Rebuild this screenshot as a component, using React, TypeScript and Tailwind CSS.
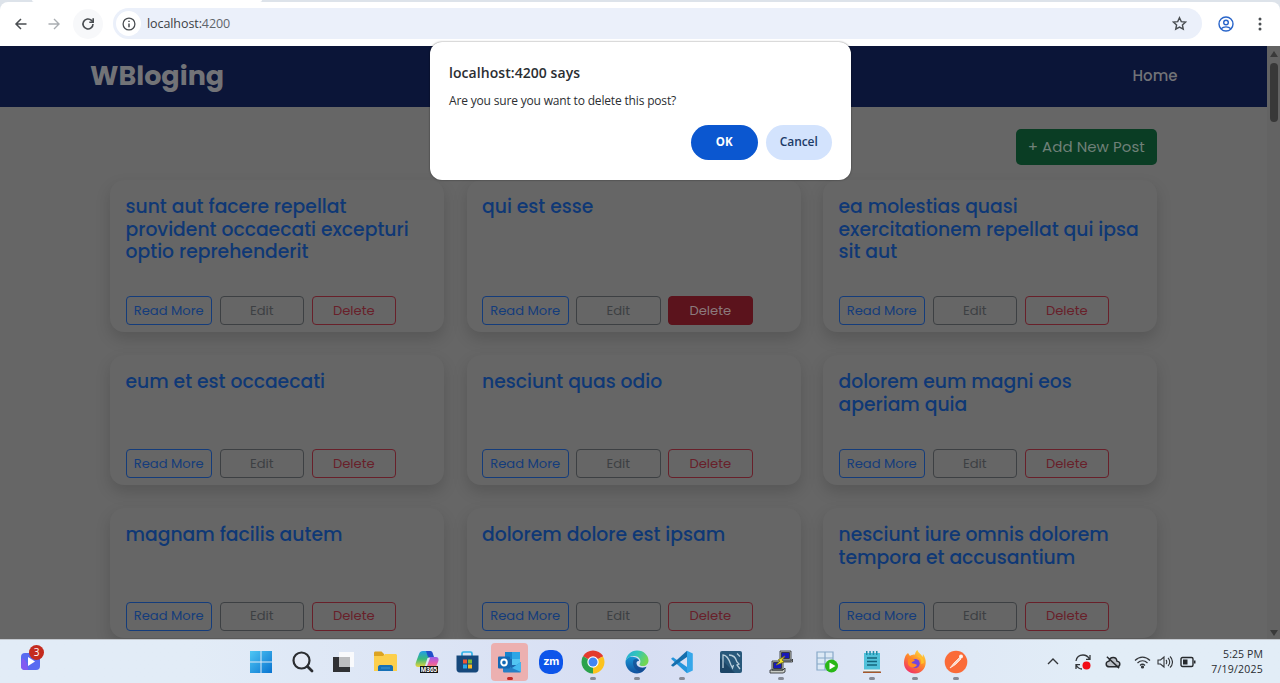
import React from "react";

const poppins = "font-['Poppins','Inter',sans-serif]";
const segoe = "font-['Segoe_UI','Open_Sans',sans-serif]";

type Post = { title: string; active?: boolean };

const rows: { height: string; posts: Post[] }[] = [
  {
    height: "h-[152px]",
    posts: [
      { title: "sunt aut facere repellat provident occaecati excepturi optio reprehenderit" },
      { title: "qui est esse", active: true },
      { title: "ea molestias quasi exercitationem repellat qui ipsa sit aut" },
    ],
  },
  {
    height: "h-[130px]",
    posts: [
      { title: "eum et est occaecati" },
      { title: "nesciunt quas odio" },
      { title: "dolorem eum magni eos aperiam quia" },
    ],
  },
  {
    height: "h-[129.5px]",
    posts: [
      { title: "magnam facilis autem" },
      { title: "dolorem dolore est ipsam" },
      { title: "nesciunt iure omnis dolorem tempora et accusantium" },
    ],
  },
];

function Card({ post, height }: { post: Post; height: string }) {
  const btn = "flex h-[29px] items-center justify-center rounded-[4px] border text-[13.125px] whitespace-nowrap";
  return (
    <article className={`flex w-[334px] flex-col justify-between rounded-[14px] bg-[#666666] px-[15.5px] pt-[16px] pb-[7px] shadow-[0_7px_15px_rgba(0,0,0,0.15)] ${height}`}>
      <h2 className="text-[18.75px] leading-[22.5px] font-medium text-[#0f3875]">{post.title}</h2>
      <div className="flex gap-[7.5px]">
        <button className={`${btn} w-[86.5px] border-[#143c7b] text-[#143c7b]`}>Read More</button>
        <button className={`${btn} w-[84.5px] border-[#3d4043] text-[#3d4043]`}>Edit</button>
        <button className={`${btn} w-[84.5px] ${post.active ? "border-[#5b131c] bg-[#5b131c] text-[#8b7a7d]" : "border-[#68202a] text-[#68202a]"}`}>Delete</button>
      </div>
    </article>
  );
}

function Toolbar() {
  return (
    <header className="flex h-[46px] flex-col bg-[#dde3ea]">
      <div className="flex h-[2px] shrink-0">
        <div className="ml-8 w-[230px] rounded-b-sm bg-white" />
      </div>
      <div className="flex h-11 items-center rounded-t-lg bg-white pb-px">
        <svg className="ml-[13px] h-4 w-4" viewBox="0 0 16 16" fill="none" stroke="#4a4e52" strokeWidth="1.5"><path d="M13.5 8H3M8 3 3 8l5 5" /></svg>
        <svg className="ml-[17px] h-4 w-4" viewBox="0 0 16 16" fill="none" stroke="#aaaeb2" strokeWidth="1.4"><path d="M2.5 8H13M8 3l5 5-5 5" /></svg>
        <div className="ml-[11px] flex h-[30px] w-[30px] items-center justify-center rounded-full bg-[#f7f8fa]">
          <svg className="h-4 w-4" viewBox="0 0 16 16" fill="none" stroke="#4a4e52" strokeWidth="1.6"><path d="M13 8a5 5 0 1 1-1.5-3.600L13 6" /><path d="M13.200 2.200v4H9.300" /></svg>
        </div>
        <div className="ml-[10px] flex h-[31px] w-[1089px] items-center rounded-full bg-[#ebf0fa] pl-[3px]">
          <div className="flex h-[25px] w-[25px] items-center justify-center rounded-full bg-white">
            <svg className="h-[14px] w-[14px]" viewBox="0 0 14 14" fill="none" stroke="#4a4e52" strokeWidth="1.3"><circle cx="7" cy="7" r="5.900" /><path d="M7 6.400v3.800M7 3.700v1.400" strokeWidth="1.500" /></svg>
          </div>
          <span className={`ml-[6px] pt-[2px] text-[12.5px] tracking-[-0.08px] text-[#60656b] ${segoe}`}><span className="text-[#3d4145]">localhost:</span>4200</span>
          <svg className="mr-[15px] ml-auto h-[15px] w-[15px]" viewBox="0 0 16 16" fill="none" stroke="#4a4e52" strokeWidth="1.5"><path d="m8 1.800 1.900 4.200 4.600.5-3.400 3.100.9 4.500L8 11.800l-4 2.300.9-4.500L1.500 6.500 6.100 6z" /></svg>
        </div>
        <svg className="ml-4 h-4 w-4" viewBox="0 0 16 16" fill="none" stroke="#2864c9" strokeWidth="1.4"><circle cx="8" cy="8" r="7" /><circle cx="8" cy="6.500" r="2.300" /><path d="M3.200 12.800c2.300-2.600 7.300-2.600 9.600 0" /></svg>
        <svg className="ml-[18px] h-4 w-4" viewBox="0 0 16 16" fill="#4a4e52"><circle cx="8" cy="3" r="1.500" /><circle cx="8" cy="8" r="1.500" /><circle cx="8" cy="13" r="1.500" /></svg>
      </div>
    </header>
  );
}

function Dialog() {
  return (
    <div className={`absolute top-[41.5px] left-[430px] flex h-[138px] w-[421px] flex-col rounded-[12px] bg-white px-[19px] text-[#2b2e32] shadow-[0_0_2px_rgba(0,0,0,0.55)] ${segoe}`}>
      <p className="mt-[21px] text-[14px] leading-5 font-semibold tracking-[0.06px]">localhost:4200 says</p>
      <p className="mt-[9px] text-[12px] leading-[18px] tracking-[-0.17px]">Are you sure you want to delete this post?</p>
      <div className="mt-[15px] flex justify-end gap-[8px] text-[12px] font-semibold">
        <button className="h-[35px] w-[66.5px] rounded-full bg-[#0b57d0] text-[11.5px] font-bold text-white">OK</button>
        <button className="h-[35px] w-[66.5px] rounded-full bg-[#d3e3fd] tracking-[-0.1px] text-[#1c3b68]">Cancel</button>
      </div>
    </div>
  );
}

const icon = "h-6 w-6";

const WindowsIcon = () => (
  <svg className={icon} viewBox="0 0 24 24">
    <defs><linearGradient id="win" x1="0" y1="0" x2="1" y2="1"><stop stopColor="#4fc7f4" /><stop offset="1" stopColor="#0873d0" /></linearGradient></defs>
    <path fill="url(#win)" d="M1 1h10.500v10.500H1zM12.500 1H23v10.500H12.500zM1 12.500h10.500V23H1zM12.500 12.500H23V23H12.500z" />
  </svg>
);
const SearchIcon = () => (
  <svg className={icon} viewBox="0 0 24 24" fill="none" stroke="#2b2d31" strokeWidth="2.2"><circle cx="11.500" cy="10.500" r="8" fill="#e4eaf5" /><path d="m17.500 16.500 4.500 4.500" strokeWidth="2.800" strokeLinecap="round" /></svg>
);
const TaskViewIcon = () => (
  <svg className={icon} viewBox="0 0 24 24"><path fill="#303134" d="M2 7h17v15H2z" /><path fill="#f9fafc" d="M8 2h15v15H8z" /><path fill="#bcbdbf" d="M8 7h11v10H8z" /></svg>
);
const FolderIcon = () => (
  <svg className={icon} viewBox="0 0 24 24">
    <path fill="#dca321" d="M1 3c0-1 .6-1.500 1.500-1.500h6L11 4v4H1z" /><path fill="#fccf4c" d="M1 6h9l2-2h10.500c.8 0 1.500.6 1.500 1.500V21H1z" />
    <path fill="#1670b6" d="M5 21v-4c0-1 .8-2 2-2h11c1.200 0 2 1 2 2v4z" /><path fill="#3e96d3" d="M8 17.500h9v1H8z" />
  </svg>
);
const M365Icon = () => (
  <svg className={icon} viewBox="0 0 24 24">
    <defs>
      <linearGradient id="ma" x2="0" y2="1"><stop stopColor="#229de8" /><stop offset=".5" stopColor="#39b97b" /><stop offset="1" stopColor="#e9d43d" /></linearGradient>
      <linearGradient id="mb" x2="0" y2="1"><stop stopColor="#9a5eea" /><stop offset=".6" stopColor="#e45bae" /><stop offset="1" stopColor="#f5806f" /></linearGradient>
    </defs>
    <path fill="url(#ma)" d="M8 1h8l-4 12c-.8 2.500-2 4-4 4H3c-2 0-3-1.500-2.300-4L4 4c.6-2 2-3 4-3z" />
    <path fill="#214fc9" d="M11 1h4c2 0 2.500 1.300 3 3l1 3h-6z" />
    <path fill="url(#mb)" d="M15 7h6c2 0 3 1.500 2.400 4L21 17H10l3-8c.4-1.300 1-2 2-2z" />
    <path fill="#dfe6f6" d="m12.500 8-2.500 8h2l3-8z" />
    <path fill="#111" d="M5 16h18v7H5z" />
    <text x="14" y="22" fill="#fff" fontFamily="Liberation Sans" fontSize="6.5" fontWeight="bold" textAnchor="middle">M365</text>
  </svg>
);
const StoreIcon = () => (
  <svg className={icon} viewBox="0 0 24 24">
    <path d="M7 6V3.500C7 2.500 7.600 2 8.500 2h7c1 0 1.500.5 1.500 1.500V6" fill="none" stroke="#30b2e8" strokeWidth="1.700" />
    <path fill="#16487b" d="M1.500 5.500h22v13.500c0 2-1.200 3.500-3 3.500h-16c-1.800 0-3-1.500-3-3.500z" />
    <path fill="#ef5635" d="M8 9.500h4v4H8z" /><path fill="#7dbb35" d="M13 9.500h4v4h-4z" /><path fill="#29a9ea" d="M8 14.500h4v4H8z" /><path fill="#fdbb20" d="M13 14.500h4v4h-4z" />
  </svg>
);
const OutlookIcon = () => (
  <svg className={icon} viewBox="0 0 24 24">
    <path fill="#1c68ae" d="M7 2h15v19H7z" /><path fill="#2da5e5" d="M14 2h8v7h-8z" /><path fill="#1683cd" d="M7 2h7v7H7z" /><path fill="#52c5f2" d="M14 9h8v6h-8z" />
    <path fill="#267fc6" d="m5 12 9 6 9-6v9c0 1-.6 1.500-1.500 1.500h-15C5.500 22.500 5 22 5 21z" /><path fill="#43b8ef" d="m14 18 9-6v10z" />
    <rect x="0" y="6.500" width="12" height="12" rx="1" fill="#1268b5" /><ellipse cx="6" cy="12.500" rx="2.800" ry="3" fill="none" stroke="#fff" strokeWidth="1.900" />
  </svg>
);
const ZoomIcon = () => (
  <span className="flex h-6 w-6 items-center justify-center rounded-[10px] bg-[#0d55ea] font-['Inter',sans-serif] text-[11px] leading-none font-bold tracking-[-0.5px] text-white">zm</span>
);
const ChromeIcon = () => (
  <svg className={icon} viewBox="0 0 24 24">
    <path fill="#e33b2e" d="M12 12 2.050 6.250a11.500 11.500 0 0 1 19.900 0z" /><path fill="#fcc31e" d="M12 12l9.950-5.750A11.500 11.500 0 0 1 12 23.500z" /><path fill="#2ba24c" d="M12 12v11.500A11.500 11.500 0 0 1 2.050 6.250z" />
    <path fill="#e33b2e" d="M12 6.500h10l-1-2H9z" /><path fill="#fcc31e" d="m16.800 14.700-5 8.800 3-.5 5-5z" /><path fill="#2ba24c" d="m7.200 14.700-5-8.500L1 10z" />
    <circle cx="12" cy="12" r="5.700" fill="#fff" /><circle cx="12" cy="12" r="4.500" fill="#4285f4" />
  </svg>
);
const EdgeIcon = () => (
  <svg className={icon} viewBox="0 0 24 24">
    <defs>
      <linearGradient id="ea" x1="0" y1="0" x2="1" y2=".4"><stop stopColor="#26a8dd" /><stop offset=".5" stopColor="#31c5ba" /><stop offset="1" stopColor="#72d653" /></linearGradient>
      <linearGradient id="eb" x2="0" y2="1"><stop stopColor="#1895d5" /><stop offset="1" stopColor="#11509d" /></linearGradient>
    </defs>
    <path fill="url(#eb)" d="M.5 12C1 8 5 6 9 7c3 .6 5 2 5 4-2-.5-3 1-2.500 3 .7 3 5 5 10 2.800C19.500 21 16 23.500 12 23.500 5.500 23.500.5 18 .5 12z" />
    <path fill="url(#ea)" d="M.6 11C1.500 5 6 .5 12 .5c7 0 11.500 5 11.500 10 0 3.500-2.500 5.500-5.500 5.500-2.500 0-4-.8-3.500-1.800C17 11 14.500 6 9 6 5 6 2 8 .6 11z" />
    <path fill="#153e83" opacity=".55" d="M8.500 10c-2 5 2 11.500 8 12 2-1 4-3 5-5.200-5 2-9.300.2-10-2.800-.5-2 .5-3.500 2.500-3-.5-2-3.500-3-5.500-1z" />
  </svg>
);
const VsCodeIcon = () => (
  <svg className={icon} viewBox="0 0 24 24">
    <path fill="#36a7ea" d="m17 .8 5.800 2.600v17.200L17 23.200z" />
    <path fill="#2495dc" d="M3 7.200 1 8.800 17 23.200V17z" />
    <path fill="#156ead" d="M17 .8 1 15.200l2 1.600L17 7z" />
  </svg>
);
const MySqlIcon = () => (
  <svg className={icon} viewBox="0 0 24 24"><rect x="1" y="1" width="22" height="22" rx="2" fill="#28587a" /><path fill="#1c4566" d="m1 8 15 15H3a2 2 0 0 1-2-2z" /><path d="M4 18V5c4 0 6 4 8 10l1.500 3 1-3M10 5c5 0 7 3 8 7l2 2-2 1 3 4M18 3.500l3 3" fill="none" stroke="#b8cedb" strokeWidth="1.300" /></svg>
);
const PuttyIcon = () => (
  <svg className={icon} viewBox="0 0 24 24" stroke="#25272a" strokeWidth=".8">
    <path fill="#c9ccc6" d="M11 1h11v9H11zM10 11h12l1.500-2v3H11zM3 11h11v9H3zM1 20h13l2-2v4l-2 1H1z" /><path fill="#1719ba" d="M12.500 2.500h8v6h-8zM4.500 12.500h8v6h-8z" /><path fill="#f0e22a" stroke="#827b18" d="m16 6-7 4 2 1-4 4 8-3-2-2z" />
  </svg>
);
const TableIcon = () => (
  <svg className={icon} viewBox="0 0 24 24"><path d="M2 2h16v18H2zM2 8h16M2 14h16M10 2v18" fill="#dce9f5" stroke="#88a9c9" strokeWidth="1.200" /><circle cx="16.500" cy="16" r="6.500" fill="#28b717" /><path fill="#fff" d="m14.500 12.500 6 3.500-6 3.500z" /></svg>
);
const NotepadIcon = () => (
  <svg className={icon} viewBox="0 0 24 24"><path fill="#51c1da" d="M4 3h16v19H4z" /><path fill="#218ba7" d="M6 1h1.500v4H6zM9.300 1h1.500v4H9.300zM12.700 1h1.500v4h-1.500zM16 1h1.500v4H16z" /><path stroke="#14657c" strokeWidth="1.400" d="M7 8h10M7 11.500h10M7 15h10" /><path fill="#f3f1ed" d="M4 19.500h16v2H4z" /><path fill="#a7572b" d="M3 21.500h18V23H3z" /></svg>
);
const FirefoxIcon = () => (
  <svg className={icon} viewBox="0 0 24 24">
    <defs><linearGradient id="ff" x1=".8" y1="0" x2=".2" y2="1"><stop stopColor="#ffe143" /><stop offset=".45" stopColor="#ff8a29" /><stop offset="1" stopColor="#f0296b" /></linearGradient></defs>
    <path fill="url(#ff)" d="M3 5l2-2 2 3c1-1 3-1.500 5-1.500.3-2 1-3.500 2.500-4.500.5 3 4 4 5 7l.5-3c2 3 3 6 2.700 9C22.300 19 18 23.500 12 23.500S1 19 1 13c0-3 .7-6 2-8z" />
    <circle cx="12.300" cy="13.500" r="4.500" fill="#7445dc" /><path fill="#ff8a22" d="M5 9c3-1 5 .2 7 1-1 1.500-3 1.500-3.500 3 2 1 4 .5 5.500 2-2 4-8 2.500-9-1z" /><path fill="#ffc229" d="M13 6c4 .5 6 4 5 8l3-1c0-4-3-8-8-7z" />
  </svg>
);
const PostmanIcon = () => (
  <svg className={icon} viewBox="0 0 24 24"><circle cx="12" cy="12" r="11.300" fill="#fa6b38" /><path d="m6 18 4-5 5.500-5.500 1.500 1.500-5.500 5.500z" fill="#f9d9cb" stroke="#fff1e9" strokeWidth=".8" /><circle cx="17" cy="6.500" r="2" fill="#fff3ec" /></svg>
);

const apps: { id: string; space: string; Icon: () => React.JSX.Element; run?: string; tile?: boolean }[] = [
  { id: "windows", space: "ml-[249px]", Icon: WindowsIcon },
  { id: "search", space: "ml-[17px]", Icon: SearchIcon },
  { id: "tasks", space: "ml-[17px]", Icon: TaskViewIcon },
  { id: "files", space: "ml-[18px]", Icon: FolderIcon },
  { id: "m365", space: "ml-[18px]", Icon: M365Icon },
  { id: "store", space: "ml-[16px]", Icon: StoreIcon },
  { id: "outlook", space: "ml-[12px]", Icon: OutlookIcon, run: "bg-[#c42b26]", tile: true },
  { id: "zoom", space: "ml-[11px]", Icon: ZoomIcon },
  { id: "chrome", space: "ml-[18px]", Icon: ChromeIcon, run: "bg-[#858a96]" },
  { id: "edge", space: "ml-[20px]", Icon: EdgeIcon, run: "bg-[#858a96]" },
  { id: "vscode", space: "ml-[21px]", Icon: VsCodeIcon, run: "bg-[#858a96]" },
  { id: "mysql", space: "ml-[25px]", Icon: MySqlIcon },
  { id: "putty", space: "ml-[26px]", Icon: PuttyIcon, run: "bg-[#858a96]" },
  { id: "table", space: "ml-[22px]", Icon: TableIcon },
  { id: "notepad", space: "ml-[21px]", Icon: NotepadIcon, run: "bg-[#858a96]" },
  { id: "firefox", space: "ml-[19px]", Icon: FirefoxIcon, run: "bg-[#858a96]" },
  { id: "postman", space: "ml-[17px]", Icon: PostmanIcon, run: "bg-[#858a96]" },
];

function Taskbar() {
  return (
    <footer className="relative flex h-11 items-center border-t border-[#c3c8ce] bg-linear-to-r from-[#e2ecf7] from-15% via-[#d7def3] via-50% to-[#e2edf7] to-85%">
      <div className="absolute top-[5px] left-5 h-7 w-7">
        <svg className="absolute top-[8px] left-[1px] h-[17px] w-[19px]" viewBox="0 0 19 17"><rect width="19" height="17" rx="4" fill="#596bf1" /><path d="M1 5c5 2 6 9 6 12H4a4 4 0 0 1-4-4z" fill="#825af1" /><path d="m7 4 7 4.500L7 13z" fill="#fff" /></svg>
        <span className={`absolute top-0 left-[9px] flex h-[15px] w-[15px] items-center justify-center rounded-full bg-[#c42b1e] text-[10px] text-white ${segoe}`}>3</span>
      </div>
      {apps.map(({ id, space, Icon, run, tile }) => (
        <div key={id} className={`flex h-[38px] shrink-0 flex-col items-center pt-[7px] ${space} ${tile ? "w-[37px] rounded-[4px] bg-[#ecb0b0]" : "w-6"}`}>
          <div className="flex h-6 w-6 items-center justify-center"><Icon /></div>
          {run && <div className={`mt-[3px] h-[3px] w-[6px] rounded-full ${run}`} />}
        </div>
      ))}
      <svg className="ml-[78px] h-4 w-[14px]" viewBox="0 0 14 16" fill="none" stroke="#33363a" strokeWidth="1.400"><path d="m2 10 5-5 5 5" /></svg>
      <svg className="ml-[14px] h-[18px] w-[18px]" viewBox="0 0 18 18" fill="none" stroke="#33363a" strokeWidth="1.300"><path d="M2 8c.7-4 3-6 7-6 3 0 5 1.300 6.500 4M16 2v4.300h-4M8 16c-3 0-4.500-1.500-6-4M2 16v-4.300h4" /><circle cx="12.500" cy="12.500" r="4" fill="#f20c16" stroke="none" /></svg>
      <svg className="ml-[13px] h-[14px] w-[16px]" viewBox="0 0 18 16" fill="#bcc1c8" stroke="#26292d" strokeWidth="1.600"><path d="M5 13.500h8c5 0 5-6 .5-6.500C13 1.500 5.500 1.500 4.500 7c-4.500.5-4.500 6.500.5 6.500z" /><path d="m2 2 14 13" /></svg>
      <svg className="ml-[13px] h-[14px] w-[17px]" viewBox="0 0 17 14" fill="none" stroke="#33363a" strokeWidth="1.200"><path d="M1 5.500c4.500-4.500 10.500-4.500 15 0M3.500 8c3-3 7-3 10 0M6 10.500c1.500-1.500 3.500-1.500 5 0" /><circle cx="8.500" cy="12" r="1" fill="#33363a" /></svg>
      <svg className="ml-[6px] h-[14px] w-[16px]" viewBox="0 0 16 14" fill="none" stroke="#33363a" strokeWidth="1.100"><path d="M1 5v4h2.500L7 12V2L3.500 5zM9 5c1 1 1 3 0 4M11 3c2.300 2 2.300 6 0 8M13 1.500c3.300 3 3.300 8 0 11" /></svg>
      <svg className="ml-[7px] h-[12px] w-[16px]" viewBox="0 0 16 12"><rect x="1" y="1.500" width="12" height="9" rx="1.500" fill="none" stroke="#25282c" strokeWidth="1.400" /><path fill="#25282c" d="M3 3.500h4.500v5H3zM14 4.500h1.500v3H14z" /></svg>
      <div className={`mr-[17px] ml-auto flex flex-col items-end text-[10.5px] leading-[15px] text-[#292c30] ${segoe}`}>
        <span className="tracking-[0.1px]">5:25 PM</span><span className="tracking-[0.22px]">7/19/2025</span>
      </div>
    </footer>
  );
}

export default function App() {
  return (
    <div className="relative flex h-[683px] w-[1280px] flex-col overflow-hidden">
      <Toolbar />
      <div className={`flex h-[593px] overflow-hidden bg-[#666666] ${poppins}`}>
        <main className="w-[1267px]">
          <nav className="flex h-[61px] items-center justify-between bg-[#0b1538] pr-[89.5px] pl-[90px] text-[#727377]">
            <span className="text-[27px] font-bold">WBloging</span>
            <span className="text-[15px] font-medium">Home</span>
          </nav>
          <div className="flex justify-end pt-[22px] pr-[110px]">
            <button className="h-[36px] w-[141.5px] rounded-[5px] bg-[#0a3d24] text-[15px] tracking-[0.05px] whitespace-nowrap text-[#6f8078]">+ Add New Post</button>
          </div>
          <div className="mt-[15px] flex flex-col gap-[23px] pl-[110px]">
            {rows.map((row) => (
              <div key={row.posts[0].title} className="flex gap-[22.5px]">
                {row.posts.map((p) => <Card key={p.title} post={p} height={row.height} />)}
              </div>
            ))}
          </div>
        </main>
        <aside className="flex w-[13px] flex-col items-center bg-[#636363] pt-[5px] pb-[3px]">
          <svg className="h-[6px] w-2" viewBox="0 0 8 6"><path fill="#3a3a3a" d="m4 0 4 6H0z" /></svg>
          <div className="mt-[6px] h-[59px] w-2 rounded-full bg-[#383838]" />
          <svg className="mt-auto h-[6px] w-2" viewBox="0 0 8 6"><path fill="#3a3a3a" d="M0 0h8L4 6z" /></svg>
        </aside>
      </div>
      <Taskbar />
      <Dialog />
    </div>
  );
}
